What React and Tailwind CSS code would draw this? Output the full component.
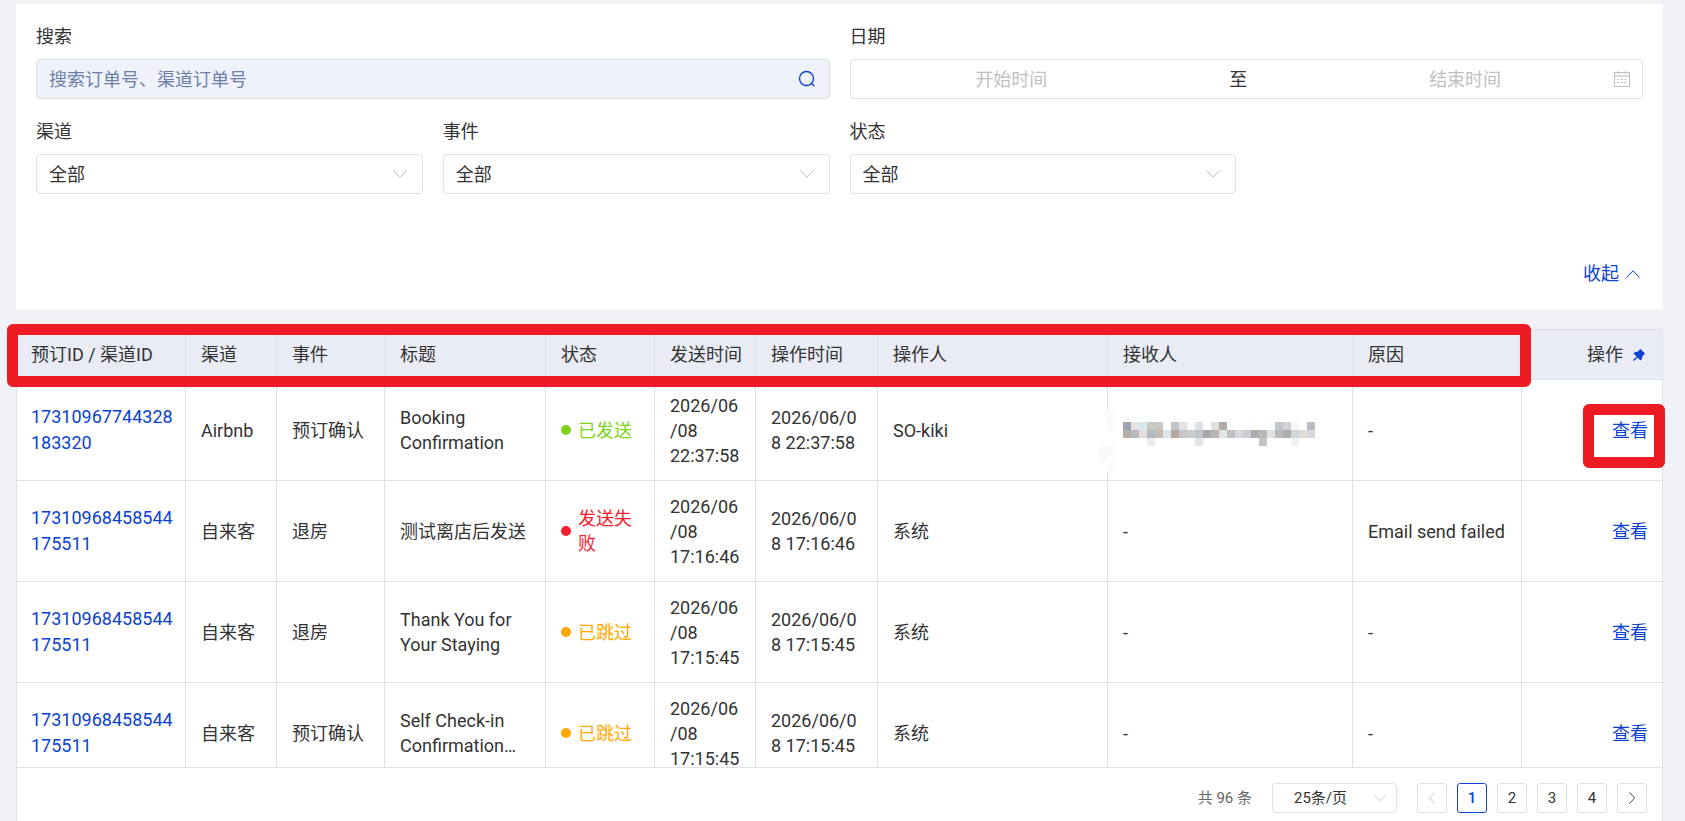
import { useState } from 'react';
import { AiFillPushpin } from 'react-icons/ai';

const FONT = "font-['Roboto','Noto_Sans_CJK_SC',sans-serif]";

function Chevron({ className, d }) {
  return (
    <svg viewBox="0 0 16 16" fill="none" stroke="currentColor" aria-hidden="true" className={className}>
      <path d={d} />
    </svg>
  );
}
const DOWN = 'M1.5 4.5 8 11.2 14.5 4.5';
const UP = 'M1.5 11.5 8 4.8 14.5 11.5';
const LEFT = 'M11 1.5 5 8 11 14.5';
const RIGHT = 'M5 1.5 11 8 5 14.5';

function SearchIcon() {
  return (
    <svg viewBox="0 0 18 18" fill="none" stroke="currentColor" strokeWidth="1.4" aria-hidden="true" className="size-[18px]">
      <circle cx="8.5" cy="8.5" r="7" />
      <path d="M12.6 13.4h1.2L16.2 16.4" />
    </svg>
  );
}

function CalendarIcon() {
  return (
    <svg viewBox="0 0 18 18" fill="none" stroke="currentColor" aria-hidden="true" className="size-[18px]">
      <rect x="1.5" y="2.5" width="15" height="14" />
      <path d="M1.5 6h15" strokeWidth="2" strokeOpacity=".6" />
      <path d="M5.5 1v3M12.5 1v3" />
      <path d="M4.5 9.5h9M4.5 12.5h9" strokeDasharray="2 1.5" />
    </svg>
  );
}

function SelectField({ id, label }) {
  return (
    <div className="flex flex-col gap-[10px]">
      <label htmlFor={id}>{label}</label>
      <div className="relative">
        <select id={id} className="block h-10 w-full appearance-none rounded-[4px] border border-[#dedfe1] bg-white px-3 outline-none">
          <option>全部</option>
        </select>
        <Chevron d={DOWN} className="pointer-events-none absolute top-3 right-[15px] size-4 text-[#bfbfbf]" />
      </div>
    </div>
  );
}

const COLUMNS = [
  ['预订ID / 渠道ID', 'w-[169px] pr-[10px] pl-[14px]'],
  ['渠道', 'w-[91px] pr-3 pl-[15px]'],
  ['事件', 'w-[108px] pr-3 pl-[15px]'],
  ['标题', 'w-[161px] pr-3 pl-[15px]'],
  ['状态', 'w-[109px] pr-3 pl-[15px]'],
  ['发送时间', 'w-[101px] pr-3 pl-[15px]'],
  ['操作时间', 'w-[122px] pr-3 pl-[15px]'],
  ['操作人', 'pr-3 pl-[15px]'],
  ['接收人', 'w-[245px] pr-3 pl-[15px]'],
  ['原因', 'w-[169px] pr-3 pl-[15px]'],
];

const STATUS = {
  已发送: { text: 'text-[#7ed321]', dot: 'bg-[#7ed321]' },
  发送失败: { text: 'text-[#f5222d]', dot: 'bg-[#f5222d]' },
  已跳过: { text: 'text-[#ffa800]', dot: 'bg-[#ffa800]' },
};

const ROWS = [
  { id: '17310967744328183320', channel: 'Airbnb', event: '预订确认', title: 'Booking Confirmation', status: '已发送', time: '22:37:58', operator: 'SO-kiki', receiver: null, reason: '-' },
  { id: '17310968458544175511', channel: '自来客', event: '退房', title: '测试离店后发送', status: '发送失败', time: '17:16:46', operator: '系统', receiver: '-', reason: 'Email send failed' },
  { id: '17310968458544175511', channel: '自来客', event: '退房', title: 'Thank You for Your Staying', status: '已跳过', time: '17:15:45', operator: '系统', receiver: '-', reason: '-' },
  { id: '17310968458544175511', channel: '自来客', event: '预订确认', title: 'Self Check-in Confirmation…', status: '已跳过', time: '17:15:45', operator: '系统', receiver: '-', reason: '-' },
];

const MOSAIC = [
  ['#9fa5b0', '#e3e3e3', '#dbe5ec', '#c8c9c2', '#c8c9c2', '#fff', '#bcc3ca', '#e0e2e4', '#f8f9fb', '#dde1e5', '#fff', '#e0e0e0', '#b3aca8', '#fffffa', '#fff', '#fff', '#fffdf3', '#fff', '#f8feff', '#c2c6ca', '#d0d3d2', '#f6f6f5', '#fff', '#b9bdc3'],
  ['#b4aea8', '#b9b9ba', '#e5dedd', '#b2b9c1', '#c7bbb6', '#e1e5e9', '#b1aaa2', '#c8c6c3', '#cdcdcd', '#bfc7cc', '#a8a9ac', '#bab5b3', '#e0e4e7', '#c0c0c3', '#d5d9de', '#cbcfd2', '#a9acb1', '#b7b7b7', '#e2e2e2', '#bbbbbc', '#acaeb3', '#d1d6d7', '#e0ddd5', '#d9d9d9'],
  ['', '', '', '#efebe8', '', '', '', '', '', '#e1e5e8', '', '', '', '', '', '', '', '#c2c6c2', '', '', '', '#f0f0f0', '', ''],
];

function Redacted() {
  return (
    <svg viewBox="0 0 224 64" shapeRendering="crispEdges" role="img" aria-label="已隐藏" className="absolute top-[31px] -left-[9px] z-10 h-16 w-56">
      <rect x="0" y="0" width="16" height="61" fill="#fff" />
      <path d="M8 3h8v16h-8zM0 35h16v8H8v8H0zM8 51h8v8H8z" fill="#f8f9fb" />
      {MOSAIC.map((line, y) =>
        line.map((fill, x) => fill && <rect key={`${x}-${y}`} x={24 + x * 8} y={11 + y * 8} width="8" height="8" fill={fill} />)
      )}
    </svg>
  );
}

const LINE = 'border-r border-b border-[#dfe0e8]';
const CELL = 'border-r border-b border-[#dfe0e8] pr-3 pl-[15px]';
const PAGE_BUTTON = 'flex size-[30px] items-center justify-center rounded-[3px] border border-[#dedfe1] bg-white';

export default function App() {
  const [page, setPage] = useState(1);
  return (
    <div className={`flex h-screen flex-col gap-5 overflow-hidden bg-[#f1f2f6] pt-1 pr-[22px] pl-4 text-[18px] leading-[25px] text-[#333] ${FONT}`}>
      <form className="shrink-0 bg-white px-5 pt-5 pb-[23px]" onSubmit={(e) => e.preventDefault()}>
        <div className="grid grid-cols-4 gap-5">
          <div className="col-span-2 flex flex-col gap-[10px]">
            <label htmlFor="search">搜索</label>
            <div className="flex h-10 items-center rounded-[4px] border border-[#dedfe1] bg-[#eff2fb] pr-[13px] pl-3">
              <input id="search" placeholder="搜索订单号、渠道订单号" className="min-w-0 flex-1 bg-transparent outline-none placeholder:text-[#6d7fa8]" />
              <button aria-label="搜索" className="text-[#0b42d0]"><SearchIcon /></button>
            </div>
          </div>
          <div className="col-span-2 flex flex-col gap-[10px]">
            <label htmlFor="start">日期</label>
            <div className="relative flex h-10 items-center rounded-[4px] border border-[#dedfe1] bg-white pr-4">
              <input id="start" placeholder="开始时间" className="min-w-0 flex-1 bg-transparent text-center outline-none placeholder:text-[#bfbfbf]" />
              <span className="w-[132px] text-center">至</span>
              <input aria-label="结束时间" placeholder="结束时间" className="min-w-0 flex-1 bg-transparent text-center outline-none placeholder:text-[#bfbfbf]" />
              <span className="pointer-events-none absolute top-[10px] right-[11px] text-[#bfbfbf]"><CalendarIcon /></span>
            </div>
          </div>
          <SelectField id="channel" label="渠道" />
          <SelectField id="event" label="事件" />
          <SelectField id="status" label="状态" />
        </div>
        <div className="mt-[67px] flex justify-end">
          <button className="flex items-center gap-[6px] pr-[2px] text-[#0b42d0]">
            收起
            <Chevron d={UP} className="size-4" />
          </button>
        </div>
      </form>

      <section className="relative flex min-h-0 flex-1 flex-col border-x border-t border-[#dfe0e8] bg-white">
        <div className="h-[438px] shrink-0 overflow-hidden border-b border-[#dfe0e8]">
          <table className="w-full min-w-[1500px] table-fixed border-separate border-spacing-0 text-left">
            <thead>
              <tr className="h-[50px] bg-[#e9ecf5]">
                {COLUMNS.map(([name, layout]) => (
                  <th key={name} className={`${LINE} ${layout} font-normal whitespace-nowrap`}>{name}</th>
                ))}
                <th className="w-[140px] border-b border-[#dfe0e8] pr-[15px] font-normal">
                  <span className="flex items-center justify-end gap-2">
                    操作
                    <AiFillPushpin className="size-4 text-[#0b42d0]" />
                  </span>
                </th>
              </tr>
            </thead>
            <tbody>
              {ROWS.map((row, i) => (
                <tr key={i} className="h-[101px]">
                  <td className={`${LINE} pr-[10px] pl-[14px] leading-[26px] break-all`}><a href="#detail" className="text-[#0b42d0]">{row.id}</a></td>
                  <td className={CELL}>{row.channel}</td>
                  <td className={CELL}>{row.event}</td>
                  <td className={CELL}>{row.title}</td>
                  <td className={CELL}>
                    <span className={`flex items-center gap-[7px] ${STATUS[row.status].text}`}>
                      <i className={`size-[10px] shrink-0 rounded-full ${STATUS[row.status].dot}`} />
                      {row.status}
                    </span>
                  </td>
                  <td className={`${CELL} break-all`}>2026/06<br />/08<br />{row.time}</td>
                  <td className={`${CELL} break-all`}>2026/06/0<br />8 {row.time}</td>
                  <td className={CELL}>{row.operator}</td>
                  <td className={`${CELL} relative`}>{row.receiver ?? <Redacted />}</td>
                  <td className={`${CELL} whitespace-nowrap`}>{row.reason}</td>
                  <td className="border-b border-[#dfe0e8] pr-[14px] text-right"><a href="#view" className="text-[#0b42d0]">查看</a></td>
                </tr>
              ))}
            </tbody>
          </table>
        </div>

        <nav aria-label="分页" className="flex items-center justify-end gap-5 pt-[15px] pr-[15px] text-[15px] leading-5">
          <span className="text-[#666]">共 96 条</span>
          <div className="relative">
            <select aria-label="每页条数" className="block h-[30px] w-[125px] appearance-none rounded-[4px] border border-[#dedfe1] bg-white pl-[21px] outline-none">
              <option>25条/页</option>
            </select>
            <Chevron d={DOWN} className="pointer-events-none absolute top-2 right-[10px] size-[14px] text-[#bfbfbf]" />
          </div>
          <div className="flex gap-[10px]">
            <button aria-label="上一页" disabled className={PAGE_BUTTON}><Chevron d={LEFT} className="size-[14px] text-[#bfbfbf]" /></button>
            {[1, 2, 3, 4].map((n) => (
              <button
                key={n}
                onClick={() => setPage(n)}
                className={n === page ? 'flex size-[30px] items-center justify-center rounded-[3px] border border-[#0b42d0] bg-white font-medium text-[#0b42d0]' : PAGE_BUTTON}
              >
                {n}
              </button>
            ))}
            <button aria-label="下一页" className={PAGE_BUTTON}><Chevron d={RIGHT} className="size-[14px]" /></button>
          </div>
        </nav>

        <div className="pointer-events-none absolute -top-[6px] right-[131px] -left-[10px] z-20 h-[63px] rounded-[6px] border-[11px] border-[#ed1c24]" />
        <div className="pointer-events-none absolute top-[74px] -right-[3px] z-20 h-16 w-[82px] rounded-[6px] border-[11px] border-[#ed1c24]" />
      </section>
    </div>
  );
}
